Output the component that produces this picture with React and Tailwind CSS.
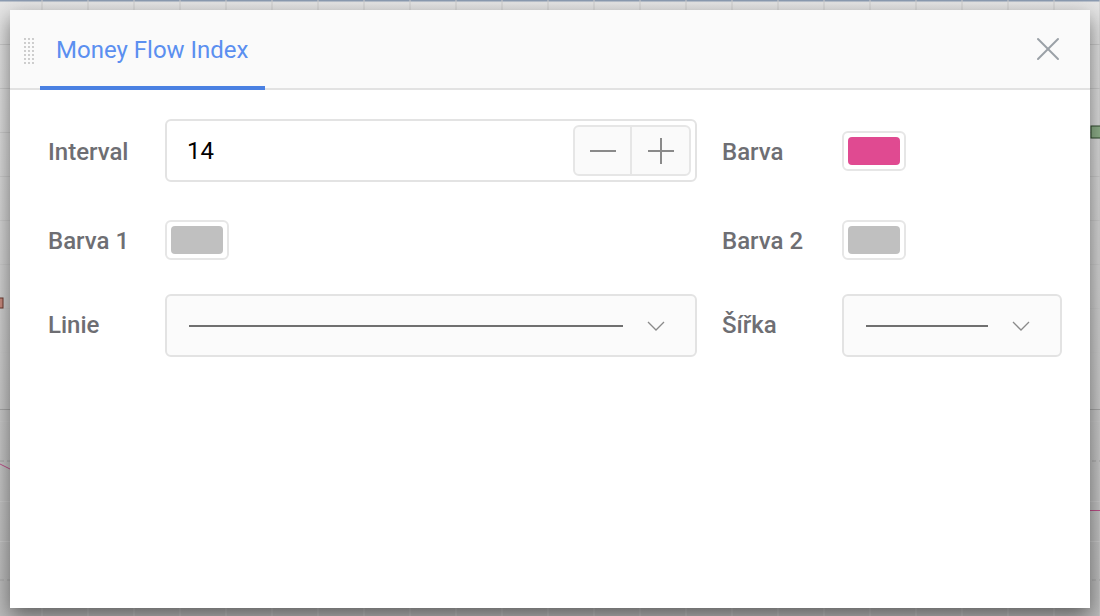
import { X } from 'lucide-react'

const font = { fontFamily: 'Roboto, "Noto Sans", sans-serif' }

function ChartBackdrop() {
  const vLines = []
  for (let x = 41.5; x < 1100; x += 46) vLines.push(x)
  const hMain = [44, 88, 132, 176, 220, 264, 308, 352]
  const hPane = [421, 501, 541]
  return (
    <svg className="absolute inset-0" width="1100" height="616" viewBox="0 0 1100 616">
      <defs>
        <linearGradient id="dim" x1="0" y1="0" x2="0" y2="1">
          <stop offset="0" stopColor="#e6e6e6" />
          <stop offset="1" stopColor="#bdbdbd" />
        </linearGradient>
      </defs>
      <rect width="1100" height="616" fill="url(#dim)" />
      <rect width="1100" height="1.5" fill="#8c9cb2" />
      {vLines.map((x) => (
        <rect key={x} x={x} y="0" width="1" height="616" fill="#cdcdcd" />
      ))}
      {hMain.map((y) => (
        <rect key={y} x="0" y={y} width="1100" height="1" fill="#cdcdcd" />
      ))}
      <rect x="0" y="409" width="1100" height="1" fill="#a8a8a8" />
      {hPane.map((y) => (
        <rect key={y} x="0" y={y} width="1100" height="1" fill="#cdcdcd" />
      ))}
      <line x1="0" y1="461" x2="1100" y2="461" stroke="#a8a8a8" strokeDasharray="4 3" />
      <line x1="0" y1="580" x2="1100" y2="580" stroke="#a8a8a8" strokeDasharray="4 3" />
      <rect x="-2" y="298" width="5" height="10" fill="#c98a7e" stroke="#6d3a30" />
      <rect x="1091" y="126" width="12" height="12" fill="#8fb08a" stroke="#2f4a2c" />
      <polyline points="0,464 10,469" fill="none" stroke="#c0508a" strokeWidth="1" />
      <line x1="1088" y1="510.5" x2="1100" y2="510.5" stroke="#c0508a" />
    </svg>
  )
}

function Grip() {
  const dots = []
  for (let r = 0; r < 7; r++) {
    for (let c = 0; c < 3; c++) {
      dots.push(<circle key={`${r}-${c}`} cx={1 + c * 4} cy={1 + r * 4} r="0.9" fill="#b8b8b8" />)
    }
  }
  return (
    <svg width="11" height="26" viewBox="0 0 11 26" className="shrink-0">
      {dots}
    </svg>
  )
}

function Swatch({ color }) {
  return (
    <div className="w-[64px] h-[40px] rounded-[6px] border-2 border-[#e6e6e6] bg-white p-[4px]">
      <div className="w-full h-full rounded-[4px]" style={{ backgroundColor: color }} />
    </div>
  )
}

function Label({ children, className = '' }) {
  return <div className={`text-[24px] font-medium text-[#6e6e73] ${className}`}>{children}</div>
}

function Chevron() {
  return (
    <svg width="18" height="10" viewBox="0 0 18 10" className="shrink-0">
      <polyline points="1,1 9,9 17,1" fill="none" stroke="#8a8a8a" strokeWidth="1.3" />
    </svg>
  )
}

function LineSelect({ width, lineWidth }) {
  return (
    <div
      className={`${width} h-[63px] rounded-[6px] border-2 border-[#e3e3e3] bg-[#fbfbfb] flex items-center pl-[22px] pr-[30px]`}
    >
      <div className={`${lineWidth} h-[2px] bg-[#707070]`} />
      <div className="flex-1" />
      <Chevron />
    </div>
  )
}

export default function App() {
  return (
    <div className="relative w-[1100px] h-[616px] overflow-hidden" style={font}>
      <ChartBackdrop />

      <div className="absolute left-[10px] top-[10px] w-[1080px] h-[598px] bg-white shadow-[0_8px_20px_rgba(0,0,0,0.5)] flex flex-col">
        {/* Header */}
        <div className="h-[80px] bg-[#fafafa] border-b-2 border-[#e2e2e2] flex items-stretch pl-[14px] pr-[22px]">
          <div className="flex items-center pt-[3px]">
            <Grip />
          </div>
          <div className="relative ml-[5px] flex items-center px-[16px]">
            <span className="text-[24px] text-[#5b8ff0] pt-[1px]">Money Flow Index</span>
            <div className="absolute left-0 right-0 -bottom-[2px] h-[4px] bg-[#4a80e2]" />
          </div>
          <div className="flex-1" />
          <button className="flex items-center text-[#9aa0a6]">
            <X className="w-[40px] h-[40px]" strokeWidth={1.2} />
          </button>
        </div>

        {/* Body */}
        <div className="pl-[38px] pr-[28px] pt-[29px] flex flex-col">
          {/* Row 1 */}
          <div className="flex items-center h-[63px]">
            <Label className="w-[117px] pt-[2px]">Interval</Label>
            <div className="w-[532px] h-[63px] rounded-[6px] border-2 border-[#e3e3e3] bg-white flex items-center pl-[20px] pr-[4px]">
              <span className="text-[24px] text-black flex-1">14</span>
              <div className="flex h-[51px] rounded-[6px] border-2 border-[#e6e6e6] bg-[#fafafa]">
                <div className="w-[57px] flex items-center justify-center border-r-2 border-[#e6e6e6]">
                  <div className="w-[26px] h-[2px] bg-[#8a8a8a]" />
                </div>
                <div className="relative w-[57px] flex items-center justify-center">
                  <div className="w-[26px] h-[2px] bg-[#8a8a8a]" />
                  <div className="absolute w-[2px] h-[26px] bg-[#8a8a8a]" />
                </div>
              </div>
            </div>
            <Label className="ml-[25px] w-[120px] pt-[2px]">Barva</Label>
            <Swatch color="#e04a91" />
          </div>

          {/* Row 2 */}
          <div className="flex items-center h-[40px] mt-[38px]">
            <Label className="w-[117px] pt-[2px]">Barva 1</Label>
            <div className="w-[532px]">
              <Swatch color="#c0c0c0" />
            </div>
            <Label className="ml-[25px] w-[120px] pt-[2px]">Barva 2</Label>
            <Swatch color="#c0c0c0" />
          </div>

          {/* Row 3 */}
          <div className="flex items-center h-[63px] mt-[34px]">
            <Label className="w-[117px] pb-[2px]">Linie</Label>
            <LineSelect width="w-[532px]" lineWidth="w-[434px]" />
            <Label className="ml-[25px] w-[120px] pb-[2px]">Šířka</Label>
            <LineSelect width="w-[220px]" lineWidth="w-[122px]" />
          </div>
        </div>
      </div>
    </div>
  )
}
